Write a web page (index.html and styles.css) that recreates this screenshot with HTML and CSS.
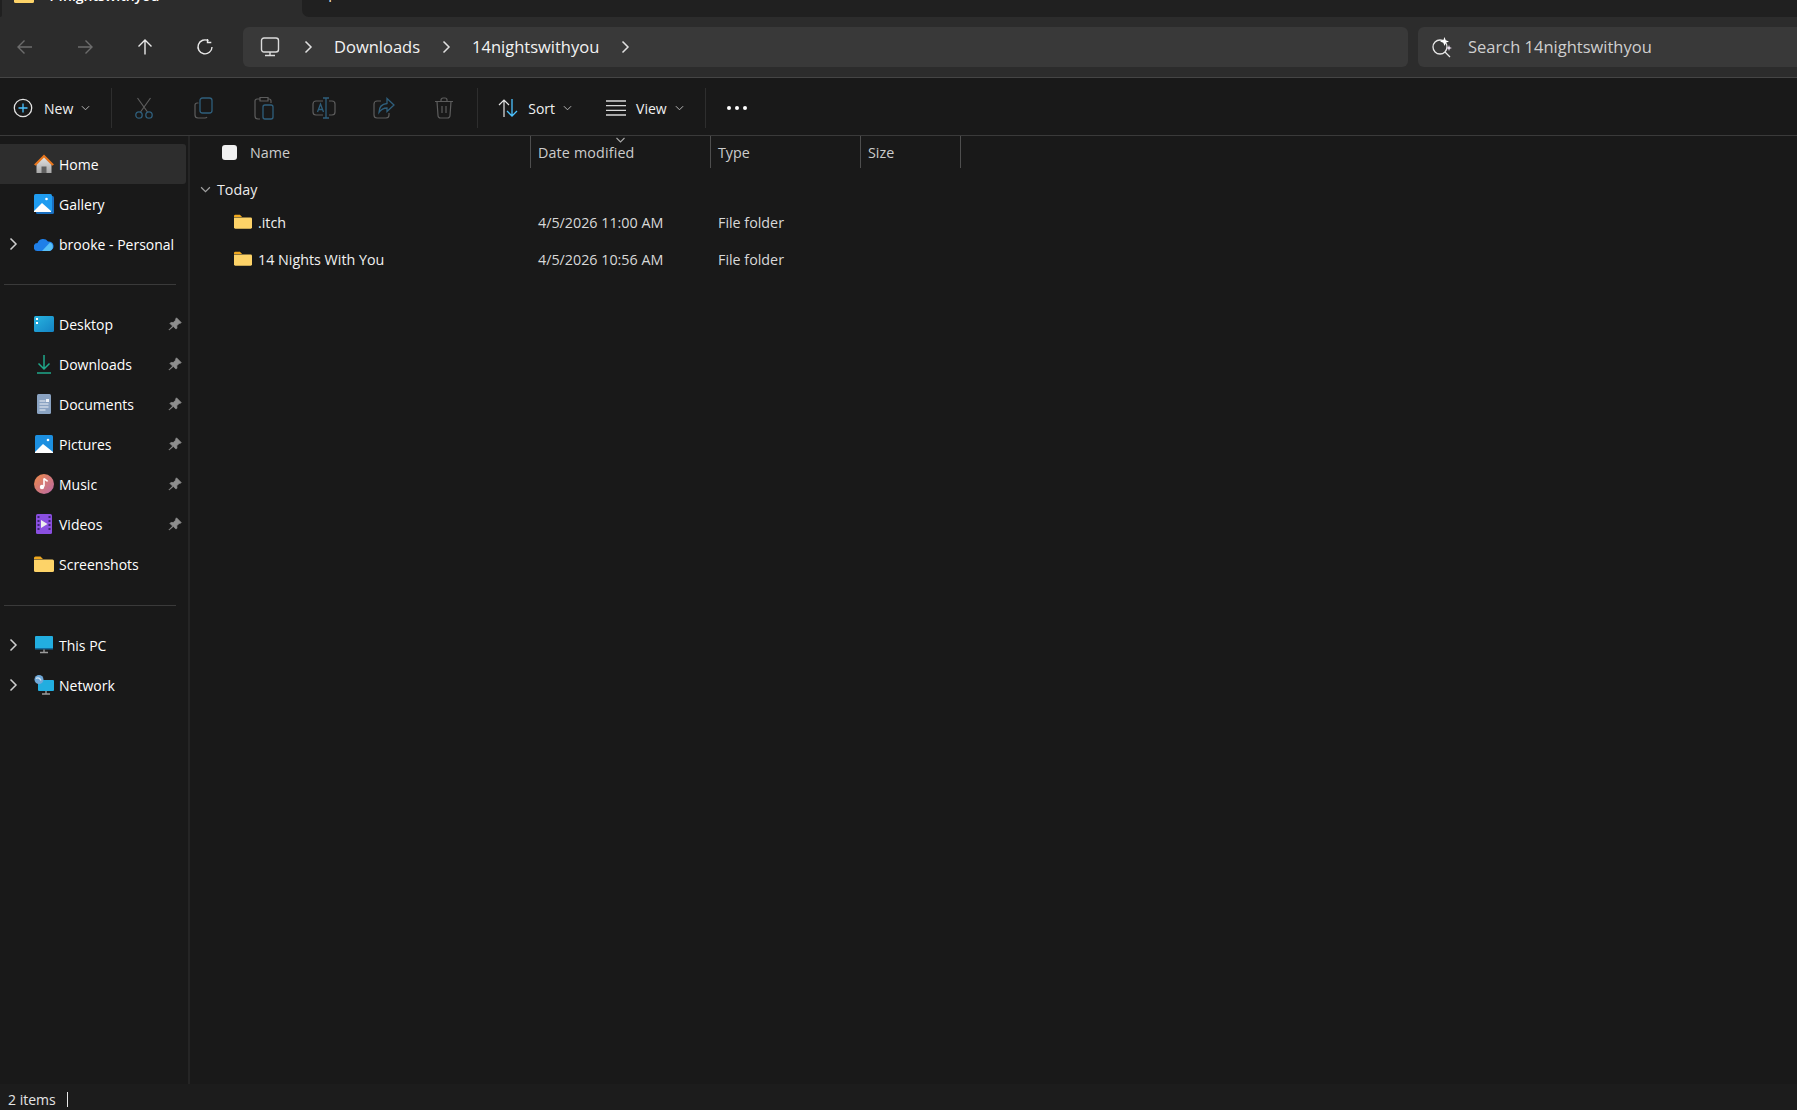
FILE: index.html
```html
<!DOCTYPE html>
<html lang="en">
<head>
    <meta charset="UTF-8">
    <meta name="viewport" content="width=device-width, initial-scale=1.0">
    <title>14nightswithyou - File Explorer</title>
    <link rel="stylesheet" href="styles.css">
</head>
<body>
    <svg class="defs" width="0" height="0">
        <symbol id="folder" viewBox="0 0 20 16">
            <path d="M0 2a1.5 1.5 0 0 1 1.5-1.5h5L9 3H0z" fill="#f0a81e"/>
            <path d="M0 3.5h18.5A1.5 1.5 0 0 1 20 5v9.500a1.500 1.500 0 0 1-1.500 1.500h-17A1.500 1.500 0 0 1 0 14.500z" fill="#fdd368"/>
        </symbol>
        <symbol id="pin" viewBox="0 0 14 14">
            <path d="M8.500.8l4.700 4.700-1 1-.9-.2-2.500 2.500.2 2.300-1 1-2.700-2.700L1.200 13l-.2-.2 3.600-3.700-2.700-2.700 1-1 2.300.2 2.500-2.500-.2-.9z" fill="#8e8e8e" stroke="#8e8e8e" stroke-width=".7"/>
        </symbol>
        <symbol id="chev" viewBox="0 0 10 14">
            <path d="M2.500 1.500L8 7l-5.500 5.500" fill="none" stroke="currentColor" stroke-width="1.500"/>
        </symbol>
        <symbol id="caret" viewBox="0 0 10 6">
            <path d="M1 1l4 4 4-4" fill="none" stroke="currentColor" stroke-width="1.100"/>
        </symbol>
    </svg>

    <div class="tabstrip">
        <div class="stripedge"></div>
        <div class="tab">
            <svg class="tabicon" width="20" height="16"><use href="#folder"/></svg>
            <span class="tabtitle">14nightswithyou</span>
            <span class="tabclose">&#x2715;</span>
        </div>
        <div class="stripfill">
            <div class="newtab">+</div>
        </div>
    </div>

    <div class="navbar">
        <div class="navbtn">
            <svg width="18" height="18" viewBox="0 0 18 18"><path d="M16 9H2M8.500 2.500L2 9l6.500 6.500" fill="none" stroke="#6c6c6c" stroke-width="1.400"/></svg>
        </div>
        <div class="navbtn">
            <svg width="18" height="18" viewBox="0 0 18 18"><path d="M2 9h14M9.500 2.500L16 9l-6.500 6.500" fill="none" stroke="#6c6c6c" stroke-width="1.400"/></svg>
        </div>
        <div class="navbtn">
            <svg width="18" height="18" viewBox="0 0 18 18"><path d="M9 16.500V2M2.500 8.500L9 2l6.500 6.500" fill="none" stroke="#e8e8e8" stroke-width="1.400"/></svg>
        </div>
        <div class="navbtn">
            <svg width="18" height="18" viewBox="0 0 18 18"><path d="M12.500 2.800A7 7 0 1 0 16 9M11.500 1v3.500h3.800" fill="none" stroke="#e8e8e8" stroke-width="1.400"/></svg>
        </div>
        <div class="addressbox">
            <svg class="pcicon" width="20" height="20" viewBox="0 0 20 20"><rect x="1.500" y="1" width="17" height="14" rx="2.500" fill="none" stroke="#dcdcdc" stroke-width="1.400"/><path d="M10 15v3M5 18.500h10" stroke="#dcdcdc" stroke-width="1.400"/></svg>
            <svg class="crumbchev" width="10" height="14"><use href="#chev"/></svg>
            <span class="crumb">Downloads</span>
            <svg class="crumbchev" width="10" height="14"><use href="#chev"/></svg>
            <span class="crumb">14nightswithyou</span>
            <svg class="crumbchev" width="10" height="14"><use href="#chev"/></svg>
        </div>
        <div class="searchbox">
            <svg width="22" height="22" viewBox="0 0 22 22"><circle cx="9" cy="11" r="7" fill="none" stroke="#e8e8e8" stroke-width="1.300"/><path d="M14 16l5 5" stroke="#e8e8e8" stroke-width="1.300"/><path d="M13.500 1l1.200 3.300L18 5.500l-3.300 1.200-1.200 3.300-1.200-3.300L9 5.500l3.300-1.200z" fill="#fff"/><path d="M18 9l.8 2.200 2.200.8-2.200.8-.8 2.200-.8-2.200-2.200-.8 2.200-.8z" fill="#f3e6f7"/></svg>
            <span class="searchtext">Search 14nightswithyou</span>
        </div>
    </div>

    <div class="toolbar">
        <div class="toolbtn newbtn">
            <svg width="20" height="20" viewBox="0 0 20 20"><circle cx="10" cy="10" r="8.700" fill="none" stroke="#e4e4e4" stroke-width="1.300"/><path d="M10 5.500v9M5.500 10h9" stroke="#4cc2ff" stroke-width="1.300"/></svg>
            <span>New</span>
            <svg class="caret" width="9" height="6"><use href="#caret"/></svg>
        </div>
        <div class="toolsep firstsep"></div>
        <div class="iconbtn">
            <svg width="20" height="22" viewBox="0 0 20 22"><path d="M3.500 1l10 14M16.500 1l-10 14" fill="none" stroke="#5d5d5d" stroke-width="1.200"/><circle cx="5" cy="18" r="3.200" fill="none" stroke="#2f5f7c" stroke-width="1.300"/><circle cx="15" cy="18" r="3.200" fill="none" stroke="#2f5f7c" stroke-width="1.300"/></svg>
        </div>
        <div class="iconbtn">
            <svg width="20" height="22" viewBox="0 0 20 22"><path d="M4.500 6H3a2 2 0 0 0-2 2v10a3 3 0 0 0 3 3h7a2.500 2.500 0 0 0 2-1" fill="none" stroke="#5d5d5d" stroke-width="1.200"/><rect x="6" y="1" width="12" height="15" rx="2.500" fill="none" stroke="#2f5f7c" stroke-width="1.300"/></svg>
        </div>
        <div class="iconbtn">
            <svg width="20" height="24" viewBox="0 0 20 24"><path d="M6 3H3a2 2 0 0 0-2 2v15a3 3 0 0 0 3 3h2M14 3h1a2 2 0 0 1 2 2v2M6 1.500h8V5H6z" fill="none" stroke="#5d5d5d" stroke-width="1.200"/><rect x="9" y="9" width="10" height="14" rx="2" fill="none" stroke="#2f5f7c" stroke-width="1.300"/></svg>
        </div>
        <div class="iconbtn">
            <svg width="24" height="22" viewBox="0 0 24 22"><path d="M11 4H4a3 3 0 0 0-3 3v8a3 3 0 0 0 3 3h7M17 4h3a3 3 0 0 1 3 3v8a3 3 0 0 1-3 3h-3" fill="none" stroke="#5d5d5d" stroke-width="1.200"/><path d="M14 1v20M11 1h6M11 21h6M5.500 15L8.500 7l3 8M6.500 12.500h4" fill="none" stroke="#2f5f7c" stroke-width="1.300"/></svg>
        </div>
        <div class="iconbtn">
            <svg width="22" height="22" viewBox="0 0 22 22"><path d="M8 4H4a3 3 0 0 0-3 3v11a3 3 0 0 0 3 3h9a3 3 0 0 0 3-3v-2" fill="none" stroke="#5d5d5d" stroke-width="1.200"/><path d="M14 1.500L21 8l-7 6.500V11c-4 0-6 1.500-8 4.500 0-5 3-8.500 8-9z" fill="none" stroke="#2f5f7c" stroke-width="1.300"/></svg>
        </div>
        <div class="iconbtn">
            <svg width="20" height="22" viewBox="0 0 20 22"><path d="M1 4.500h18M7 4.500V3a2 2 0 0 1 2-2h2a2 2 0 0 1 2 2v1.500M3 4.500l1 14a2.500 2.500 0 0 0 2.500 2.500h7a2.500 2.500 0 0 0 2.500-2.500l1-14M8 9v7M12 9v7" fill="none" stroke="#5d5d5d" stroke-width="1.200"/></svg>
        </div>
        <div class="toolsep midsep"></div>
        <div class="toolbtn sortbtn">
            <svg width="20" height="20" viewBox="0 0 20 20"><path d="M6 19V2M1 7l5-5 5 5" fill="none" stroke="#e4e4e4" stroke-width="1.200"/><path d="M14 1v17M9 13l5 5 5-5" fill="none" stroke="#4cc2ff" stroke-width="1.300"/></svg>
            <span>Sort</span>
            <svg class="caret" width="9" height="6"><use href="#caret"/></svg>
        </div>
        <div class="toolbtn viewbtn">
            <svg width="20" height="16" viewBox="0 0 20 16"><path d="M0 1h20M0 5.700h20M0 10.300h20M0 15h20" stroke="#d8d8d8" stroke-width="1.300"/></svg>
            <span>View</span>
            <svg class="caret" width="9" height="6"><use href="#caret"/></svg>
        </div>
        <div class="toolsep lastsep"></div>
        <div class="dots"><i></i><i></i><i></i></div>
    </div>

    <div class="content">
        <nav class="sidebar">
            <div class="navrow selected">
                <span class="expander"></span>
                <svg class="navicon" width="20" height="20" viewBox="0 0 20 20"><defs><linearGradient id="wall" x1="0" y1="0" x2="0" y2="1"><stop offset="0" stop-color="#e6e6e6"/><stop offset="1" stop-color="#a8a8a8"/></linearGradient></defs><path d="M2.500 9v10h15V9L10 2z" fill="url(#wall)"/><path d="M7.500 19v-6.500h5V19z" fill="#5f5f5f"/><path d="M0 10.500L10 .5l10 10-1.800 1.300L10 3.500l-8.200 8.300z" fill="#e7761d"/></svg>
                <span class="navlabel">Home</span>
            </div>
            <div class="navrow">
                <span class="expander"></span>
                <svg class="navicon" width="20" height="20" viewBox="0 0 20 20"><rect x="2" y="2" width="18" height="18" rx="1.500" fill="#1a6fc0"/><rect x="0" y="0" width="18" height="18" rx="1.500" fill="#1f9cf0"/><path d="M0 17l8-8 9 8v1H0z" fill="#fff"/><circle cx="12.500" cy="5" r="1.300" fill="#fff"/></svg>
                <span class="navlabel">Gallery</span>
            </div>
            <div class="navrow">
                <svg class="expander" width="10" height="14"><use href="#chev"/></svg>
                <svg class="navicon" width="20" height="14" viewBox="0 0 20 14"><path d="M4 14a4 4 0 0 1-.5-8A6 6 0 0 1 14 4.500 4.800 4.800 0 0 1 15.500 14z" fill="#1f7fe8"/><path d="M8 14l8-8.500a4.500 4.500 0 0 1-.5 8.500z" fill="#58c0f7"/></svg>
                <span class="navlabel">brooke - Personal</span>
            </div>

            <div class="navsep"></div>

            <div class="navrow">
                <span class="expander"></span>
                <svg class="navicon" width="20" height="16" viewBox="0 0 20 16"><defs><linearGradient id="desk" x1="0" y1="0" x2="1" y2="1"><stop offset="0" stop-color="#28b4e0"/><stop offset="1" stop-color="#1483c4"/></linearGradient></defs><rect width="20" height="16" rx="1.500" fill="url(#desk)"/><path d="M2 2h2v2H2zM2 6h2v2H2z" fill="#fff"/></svg>
                <span class="navlabel">Desktop</span>
                <svg class="pin" width="14" height="14"><use href="#pin"/></svg>
            </div>
            <div class="navrow">
                <span class="expander"></span>
                <svg class="navicon" width="20" height="20" viewBox="0 0 20 20"><path d="M10 1v14M4.500 9.500L10 15l5.500-5.500M3 19h14" fill="none" stroke="#1fa88a" stroke-width="1.500"/></svg>
                <span class="navlabel">Downloads</span>
                <svg class="pin" width="14" height="14"><use href="#pin"/></svg>
            </div>
            <div class="navrow">
                <span class="expander"></span>
                <svg class="navicon" width="20" height="20" viewBox="0 0 20 20"><rect x="3" y="0" width="14" height="20" rx="1.500" fill="#8aa3c2"/><path d="M5.500 7h6M5.500 10h9M5.500 13h9M5.500 16h6" stroke="#eef2f7"/><rect x="12" y="5" width="3" height="3" fill="#eef2f7"/></svg>
                <span class="navlabel">Documents</span>
                <svg class="pin" width="14" height="14"><use href="#pin"/></svg>
            </div>
            <div class="navrow">
                <span class="expander"></span>
                <svg class="navicon" width="20" height="20" viewBox="0 0 20 20"><rect x="1" y="1" width="18" height="18" rx="1.500" fill="#1c8fe0"/><path d="M1 18l8-8 10 8v1H1z" fill="#fff"/><circle cx="14" cy="6" r="1.300" fill="#fff"/></svg>
                <span class="navlabel">Pictures</span>
                <svg class="pin" width="14" height="14"><use href="#pin"/></svg>
            </div>
            <div class="navrow">
                <span class="expander"></span>
                <svg class="navicon" width="20" height="20" viewBox="0 0 20 20"><defs><linearGradient id="mus" x1="0" y1="0" x2="1" y2="1"><stop offset="0" stop-color="#ee8a48"/><stop offset="1" stop-color="#b868a8"/></linearGradient></defs><circle cx="10" cy="10" r="10" fill="url(#mus)"/><path d="M10 4.500v8" stroke="#fff" stroke-width="1.600"/><path d="M10 4.500c1 1.500 3 1.500 3.500 3" fill="none" stroke="#fff" stroke-width="1.600"/><circle cx="8" cy="13" r="2.200" fill="#fff"/></svg>
                <span class="navlabel">Music</span>
                <svg class="pin" width="14" height="14"><use href="#pin"/></svg>
            </div>
            <div class="navrow">
                <span class="expander"></span>
                <svg class="navicon" width="20" height="20" viewBox="0 0 20 20"><rect x="2" y="0" width="16" height="20" rx="1.500" fill="#8a4fe0"/><path d="M3.500 2h2v2h-2zM3.500 6h2v2h-2zM3.500 10h2v2h-2zM3.500 14h2v2h-2zM14.500 2h2v2h-2zM14.500 6h2v2h-2zM14.500 10h2v2h-2zM14.500 14h2v2h-2z" fill="#3c2470"/><path d="M7 6l6.500 4L7 14z" fill="#eee"/></svg>
                <span class="navlabel">Videos</span>
                <svg class="pin" width="14" height="14"><use href="#pin"/></svg>
            </div>
            <div class="navrow">
                <span class="expander"></span>
                <svg class="navicon" width="20" height="16"><use href="#folder"/></svg>
                <span class="navlabel">Screenshots</span>
            </div>

            <div class="navsep lowersep"></div>

            <div class="navrow">
                <svg class="expander" width="10" height="14"><use href="#chev"/></svg>
                <svg class="navicon" width="20" height="18" viewBox="0 0 20 18"><rect x="1" y="0" width="18" height="13" rx="1" fill="#22aee0"/><path d="M1 12h18v1.500H1z" fill="#136a9c"/><path d="M10 13.500V16M6 16.500h8" stroke="#9a9a9a" stroke-width="1.400"/></svg>
                <span class="navlabel">This PC</span>
            </div>
            <div class="navrow">
                <svg class="expander" width="10" height="14"><use href="#chev"/></svg>
                <svg class="navicon" width="20" height="20" viewBox="0 0 20 20"><rect x="4" y="5" width="16" height="11" rx="1" fill="#22aee0"/><path d="M12 16v2.500M8 19h8" stroke="#9a9a9a" stroke-width="1.400"/><circle cx="5" cy="4.500" r="4.500" fill="#6fa8d8"/><path d="M2 3.500c2-1.500 4 0 5 2" stroke="#d6e6f4" stroke-width="1.300" fill="none"/></svg>
                <span class="navlabel">Network</span>
            </div>
        </nav>

        <main class="filepane">
            <div class="listhead">
                <div class="col namecol">
                    <span class="checkbox"></span>
                    <span>Name</span>
                </div>
                <div class="col datecol">
                    <span>Date modified</span>
                    <svg class="sortcaret" width="11" height="6"><use href="#caret"/></svg>
                </div>
                <div class="col typecol">Type</div>
                <div class="col sizecol">Size</div>
            </div>
            <div class="grouphead">
                <svg class="groupcaret" width="11" height="7"><use href="#caret"/></svg>
                <span>Today</span>
            </div>
            <div class="filerow">
                <div class="filename">
                    <svg width="18" height="15"><use href="#folder"/></svg>
                    <span>.itch</span>
                </div>
                <div class="filecell">4/5/2026 11:00 AM</div>
                <div class="filecell">File folder</div>
            </div>
            <div class="filerow">
                <div class="filename">
                    <svg width="18" height="15"><use href="#folder"/></svg>
                    <span>14 Nights With You</span>
                </div>
                <div class="filecell">4/5/2026 10:56 AM</div>
                <div class="filecell">File folder</div>
            </div>
        </main>
    </div>

    <div class="statusbar">
        <span>2 items</span>
        <span class="statusline"></span>
    </div>
</body>
</html>
```

FILE: styles.css
```css
* {
    box-sizing: border-box;
}
body {
    margin: 0;
    height: 1110px;
    overflow: hidden;
    display: flex;
    flex-direction: column;
    background-color: #191919;
    color: #fff;
    font-family: "Open Sans", "Noto Sans", sans-serif;
    font-size: 14px;
}
svg {
    display: block;
    flex: none;
}
.defs {
    position: absolute;
}

/* tab strip, cut off by the top of the window */
.tabstrip {
    height: 17px;
    flex: none;
    display: flex;
    align-items: flex-end;
    background-color: #2c2c2c;
    overflow: hidden;
    color: #e8e8e8;
}
.stripedge {
    width: 2px;
    height: 17px;
    background-color: #202020;
    border-radius: 0 0 4px 0;
}
.tab {
    width: 300px;
    height: 40px;
    padding: 0 16px 0 12px;
    flex: none;
    display: flex;
    align-items: center;
    gap: 13px;
    transform: translateY(-2px);
}
.tabtitle {
    flex: 1;
    font-weight: 600;
    color: #fff;
}
.tabclose {
    font-size: 11px;
}
.stripfill {
    flex: 1;
    height: 17px;
    background-color: #202020;
    border-radius: 0 0 0 7px;
}
.newtab {
    height: 40px;
    margin: -23px 0 0 23px;
    font-size: 18px;
    line-height: 40px;
}

/* back/forward row */
.navbar {
    height: 61px;
    flex: none;
    padding: 10px 0;
    display: flex;
    background-color: #2c2c2c;
    border-bottom: 1px solid #454545;
}
.navbtn {
    width: 60px;
    display: flex;
    align-items: center;
    justify-content: center;
}
.navbtn:first-child {
    margin-left: -5px;
}
.addressbox {
    width: 1165px;
    margin-left: 8px;
    padding-left: 17px;
    display: flex;
    align-items: center;
    background-color: #393939;
    border-radius: 6px;
    font-size: 16.5px;
    color: #f2f2f2;
}
.pcicon {
    margin-right: 23px;
}
.crumbchev {
    margin-right: 21px;
    color: #e0e0e0;
}
.crumb {
    margin: -2px 21px 0 0;
}
.searchbox {
    flex: 1;
    margin-left: 10px;
    padding-left: 13px;
    display: flex;
    align-items: center;
    gap: 15px;
    background-color: #393939;
    border-radius: 6px 0 0 6px;
    font-size: 16.5px;
    color: #cfcfcf;
}
.searchtext {
    margin-top: -2px;
}

/* command bar */
.toolbar {
    height: 58px;
    flex: none;
    padding: 3px 0 0 13px;
    display: flex;
    align-items: center;
    border-bottom: 1px solid #3a3a3a;
    color: #f0f0f0;
}
.toolbtn {
    display: flex;
    align-items: center;
}
.toolbtn span {
    margin: 0 8px 0 11px;
}
.sortbtn span, .viewbtn span {
    margin-left: 10px;
}
.caret {
    color: #b8b8b8;
}
.toolsep {
    width: 1px;
    height: 40px;
    background-color: #2e2e2e;
}
.firstsep {
    margin-left: 21px;
}
.midsep {
    margin-left: 3px;
}
.lastsep {
    margin-left: 21px;
}
.iconbtn {
    width: 60px;
    display: flex;
    align-items: center;
    justify-content: center;
}
.firstsep + .iconbtn {
    margin-left: 2px;
}
.sortbtn {
    margin-left: 20px;
}
.viewbtn {
    margin-left: 34px;
}
.dots {
    margin-left: 21px;
    display: flex;
    gap: 4px;
}
.dots i {
    width: 4px;
    height: 4px;
    border-radius: 50%;
    background-color: #fff;
}

/* sidebar and file list */
.content {
    flex: 1;
    display: flex;
    min-height: 0;
}
.sidebar {
    width: 190px;
    flex: none;
    padding-top: 8px;
    border-right: 2px solid #252525;
}
.navrow {
    height: 40px;
    width: 186px;
    display: flex;
    align-items: center;
    border-radius: 0 3px 3px 0;
}
.navrow.selected {
    background-color: #2d2d2d;
}
.expander {
    width: 10px;
    height: 14px;
    margin: 0 16px 0 8px;
    color: #cfcfcf;
}
.navlabel {
    flex: 1;
    margin-left: 5px;
    white-space: nowrap;
}
.pin {
    margin-right: 4px;
}
.navsep {
    width: 172px;
    height: 1px;
    margin: 20px 0 19px 4px;
    background-color: #3a3a3a;
}
.lowersep {
    margin-top: 21px;
}
.filepane {
    flex: 1;
    font-size: 14.3px;
    color: #d8d8d8;
}
.listhead {
    height: 32px;
    display: flex;
}
.col {
    height: 32px;
    padding-left: 7px;
    flex: none;
    display: flex;
    align-items: center;
    border-right: 1px solid #4e4e4e;
    color: #cccccc;
}
.namecol {
    width: 341px;
    padding-left: 32px;
    gap: 13px;
}
.datecol {
    position: relative;
    width: 180px;
    letter-spacing: 0.15px;
}
.typecol {
    width: 150px;
}
.sizecol {
    width: 100px;
}
.checkbox {
    width: 15px;
    height: 15px;
    background-color: #f0f0f0;
    border-radius: 3px;
}
.sortcaret {
    position: absolute;
    left: 84px;
    top: 1px;
    color: #a8a8a8;
}
.grouphead {
    height: 36px;
    padding: 7px 0 0 10px;
    display: flex;
    align-items: center;
    gap: 6px;
    color: #ececec;
}
.groupcaret {
    color: #a0a0a0;
}
.filerow {
    height: 37px;
    display: grid;
    grid-template-columns: 348px 180px 150px;
    align-items: center;
}
.filename {
    padding-left: 44px;
    display: flex;
    align-items: center;
    gap: 6px;
    color: #f0f0f0;
}
.filename svg {
    margin-top: -3px;
}

.statusbar {
    height: 26px;
    flex: none;
    padding: 5px 0 0 8px;
    display: flex;
    align-items: center;
    gap: 11px;
    background-color: #1c1c1c;
    color: #e4e4e4;
}
.statusline {
    width: 1px;
    height: 15px;
    background-color: #e8e8e8;
}
```
